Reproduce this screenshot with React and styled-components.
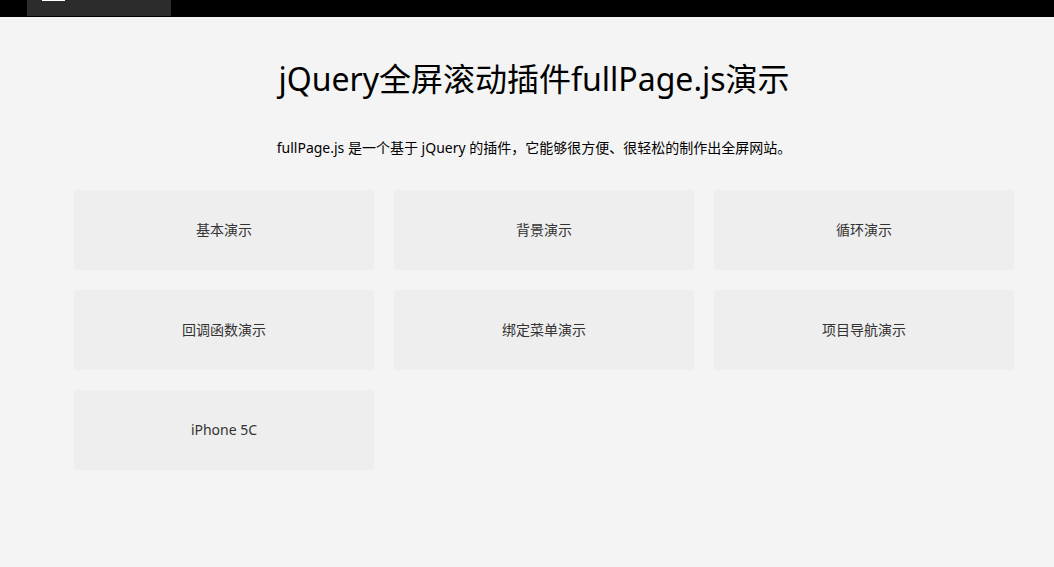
import React from "react";
import styled, { createGlobalStyle } from "styled-components";

const demos = [
  "基本演示",
  "背景演示",
  "循环演示",
  "回调函数演示",
  "绑定菜单演示",
  "项目导航演示",
  "iPhone 5C",
];

const GlobalStyle = createGlobalStyle`
  html, body {
    margin: 0;
    padding: 0;
    background: #f4f4f4;
    font-family: "Noto Sans", "Noto Sans CJK SC", sans-serif;
  }
`;

function App() {
  return (
    <>
      <GlobalStyle />
      <TopBar>
        <MenuTab>
          <MenuLine />
        </MenuTab>
      </TopBar>
      <Page>
        <Wrapper>
          <Title>jQuery全屏滚动插件fullPage.js演示</Title>
          <Intro>
            fullPage.js 是一个基于 jQuery 的插件，它能够很方便、很轻松的制作出全屏网站。
          </Intro>
          <DemoList>
            {demos.map((name) => (
              <DemoCard key={name} href="#">
                {name}
              </DemoCard>
            ))}
          </DemoList>
        </Wrapper>
      </Page>
    </>
  );
}

export default App;

const TopBar = styled.div`
  height: 17px;
  background: #000;
  display: flex;
  align-items: flex-start;
`;

const MenuTab = styled.div`
  margin-left: 27px;
  width: 144px;
  height: 16px;
  background: #2c2c2c;
  position: relative;
`;

const MenuLine = styled.span`
  position: absolute;
  left: 15px;
  top: 0;
  width: 23px;
  height: 1px;
  background: #fff;
`;

const Page = styled.div`
  padding-left: 14px;
`;

const Wrapper = styled.div`
  width: 960px;
  margin: 0 auto;
`;

const Title = styled.h1`
  margin: 40px 0 0;
  font-size: 32px;
  font-weight: normal;
  line-height: 43px;
  color: #000;
  text-align: center;
`;

const Intro = styled.p`
  margin: 38px 0 0;
  font-size: 14px;
  line-height: 20px;
  color: #000;
  text-align: center;
`;

const DemoList = styled.div`
  display: grid;
  grid-template-columns: repeat(3, 300px);
  gap: 20px;
  padding-left: 20px;
  margin-top: 32px;
`;

const DemoCard = styled.a`
  display: flex;
  align-items: center;
  justify-content: center;
  height: 80px;
  padding-bottom: 2px;
  box-sizing: border-box;
  background: #eee;
  color: #333;
  font-size: 14px;
  text-decoration: none;
`;
